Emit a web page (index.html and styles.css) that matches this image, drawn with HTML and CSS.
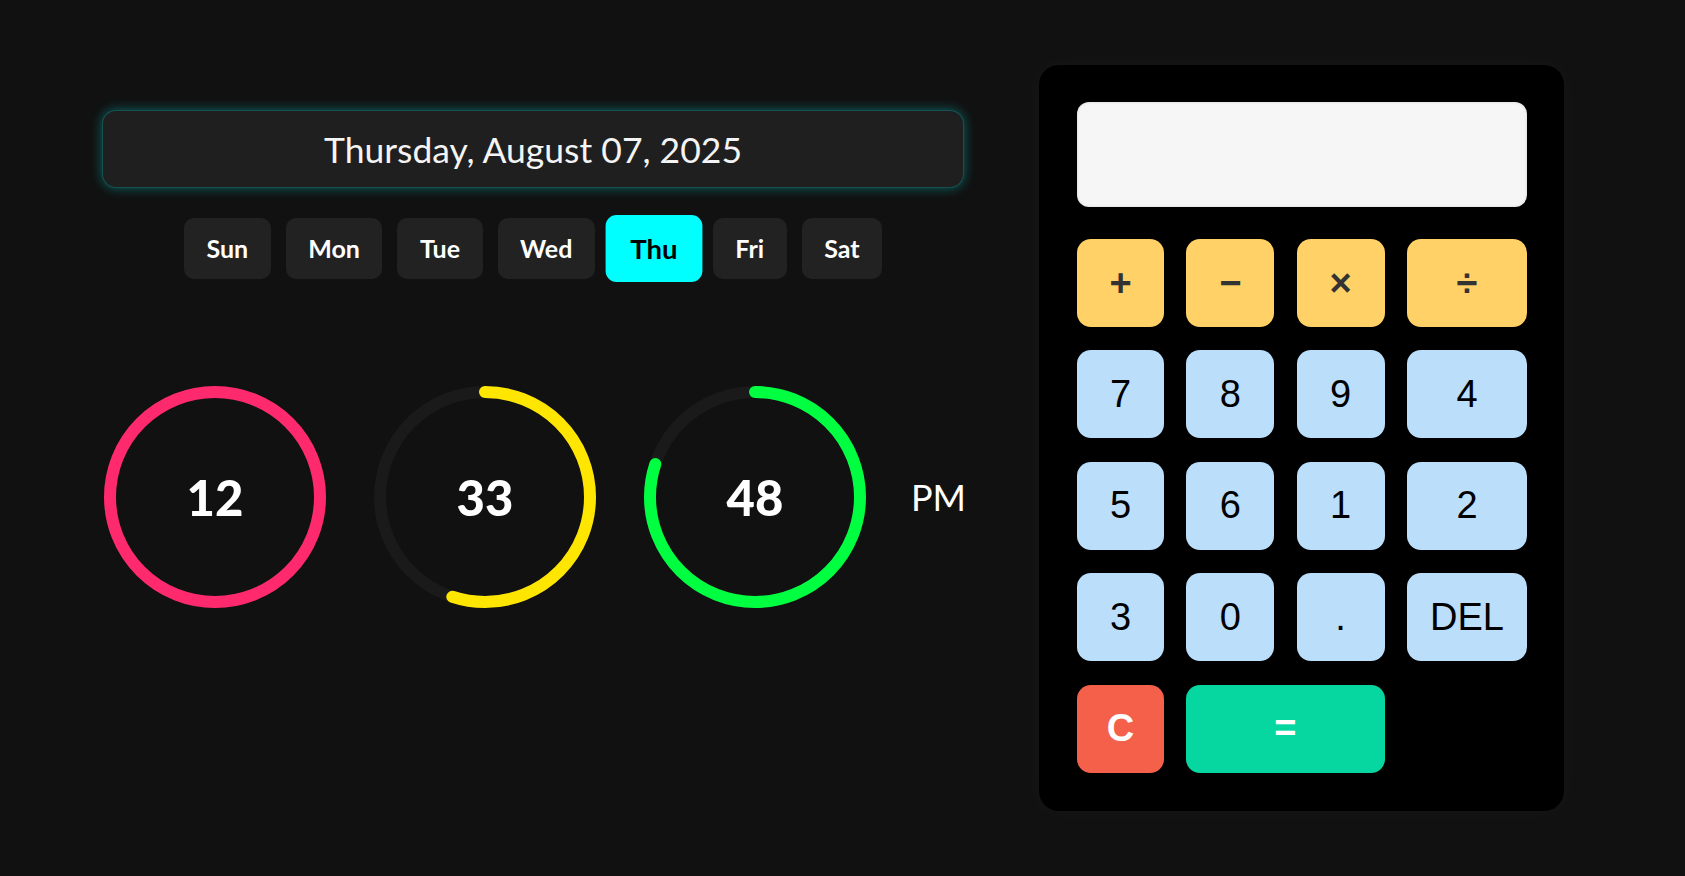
FILE: index.html
```html
<!DOCTYPE html>
<html lang="en">
<head>
<meta charset="utf-8">
<title>Clock &amp; Calculator</title>
<link rel="stylesheet" href="styles.css">
</head>
<body>
<div class="app">
  <section class="clock">
    <div class="date">Thursday, August 07, 2025</div>
    <div class="days">
      <span class="day">Sun</span>
      <span class="day">Mon</span>
      <span class="day">Tue</span>
      <span class="day">Wed</span>
      <span class="day active">Thu</span>
      <span class="day">Fri</span>
      <span class="day">Sat</span>
    </div>
    <div class="time">
      <div class="ring">
        <svg width="222" height="222" viewBox="0 0 222 222">
          <circle class="track" cx="111" cy="111" r="105"/>
          <circle class="arc hours" cx="111" cy="111" r="105" stroke-dasharray="659.7 659.7"/>
        </svg>
        <span class="num">12</span>
      </div>
      <div class="ring">
        <svg width="222" height="222" viewBox="0 0 222 222">
          <circle class="track" cx="111" cy="111" r="105"/>
          <circle class="arc minutes" cx="111" cy="111" r="105" stroke-dasharray="362.8 659.7"/>
        </svg>
        <span class="num">33</span>
      </div>
      <div class="ring">
        <svg width="222" height="222" viewBox="0 0 222 222">
          <circle class="track" cx="111" cy="111" r="105"/>
          <circle class="arc seconds" cx="111" cy="111" r="105" stroke-dasharray="527.8 659.7"/>
        </svg>
        <span class="num">48</span>
      </div>
      <span class="ampm">PM</span>
    </div>
  </section>

  <section class="calc">
    <div class="screen"></div>
    <div class="keys">
      <button class="key op">+</button>
      <button class="key op">&minus;</button>
      <button class="key op">&times;</button>
      <button class="key op">&divide;</button>
      <button class="key">7</button>
      <button class="key">8</button>
      <button class="key">9</button>
      <button class="key">4</button>
      <button class="key">5</button>
      <button class="key">6</button>
      <button class="key">1</button>
      <button class="key">2</button>
      <button class="key">3</button>
      <button class="key">0</button>
      <button class="key">.</button>
      <button class="key">DEL</button>
      <button class="key clear">C</button>
      <button class="key equals">=</button>
    </div>
  </section>
</div>
</body>
</html>
```

FILE: styles.css
```css
html, body {
  margin: 0;
  padding: 0;
  background: #111111;
  height: 100%;
}

body {
  font-family: Lato, "Open Sans", sans-serif;
  color: #ffffff;
}

.app {
  display: flex;
  align-items: flex-start;
  gap: 75px;
  padding: 65px 0 0 102px;
}

.clock {
  width: 862px;
  padding-top: 45px;
  display: flex;
  flex-direction: column;
  align-items: center;
}

.date {
  width: 100%;
  box-sizing: border-box;
  height: 78px;
  display: flex;
  align-items: center;
  justify-content: center;
  background: #1f1f1f;
  border: 1px solid rgba(0, 200, 200, 0.3);
  border-radius: 14px;
  box-shadow: 0 0 12px rgba(0, 255, 255, 0.35);
  font-size: 35.5px;
  font-weight: 400;
  color: #f4f4f4;
}

.days {
  margin-top: 30px;
  display: flex;
  gap: 15px;
}

.day {
  display: block;
  background: #222222;
  border-radius: 10px;
  padding: 0 22.5px;
  height: 61px;
  line-height: 61px;
  font-size: 25px;
  font-weight: 700;
  color: #ffffff;
}

.day.active {
  background: #00ffff;
  color: #000000;
  transform: scale(1.1);
}

.time {
  align-self: stretch;
  margin-top: 107px;
  padding-left: 2px;
  display: flex;
  align-items: center;
  gap: 48px;
}

.ring {
  position: relative;
  width: 222px;
  height: 222px;
}

.ring svg {
  display: block;
  transform: rotate(-90deg);
}

.track {
  fill: none;
  stroke: #1a1a1a;
  stroke-width: 12;
}

.arc {
  fill: none;
  stroke-width: 12;
  stroke-linecap: round;
}

.hours { stroke: #ff2a6d; }
.minutes { stroke: #ffe600; }
.seconds { stroke: #00ff41; }

.num {
  position: absolute;
  inset: 0;
  display: flex;
  align-items: center;
  justify-content: center;
  font-size: 49px;
  font-weight: 900;
  color: #ffffff;
}

.ampm {
  margin-left: -3px;
  font-size: 36px;
  font-weight: 400;
  color: #ffffff;
}

.calc {
  width: 525px;
  box-sizing: border-box;
  padding: 37px 37px 38px 38px;
  background: #000000;
  border-radius: 20px;
  box-shadow: 0 0 22px rgba(255, 255, 255, 0.03);
}

.screen {
  height: 105px;
  background: #f6f6f6;
  border-radius: 12px;
  box-shadow: inset 0 0 3px rgba(0, 0, 0, 0.15);
}

.keys {
  margin-top: 32px;
  display: grid;
  grid-template-columns: 87px 88px 88px 1fr;
  grid-auto-rows: 88px;
  column-gap: 22.3px;
  row-gap: 23.4px;
}

.key {
  border: none;
  border-radius: 14px;
  background: #bbdefb;
  color: #000000;
  font-family: "Liberation Sans", Arial, sans-serif;
  font-size: 38px;
  font-weight: 400;
  padding: 0;
  margin: 0;
}

.key.op {
  background: #ffd166;
  color: #333333;
  font-weight: 700;
}

.key.clear {
  background: #f5604b;
  color: #ffffff;
  font-weight: 700;
}

.key.equals {
  grid-column: span 2;
  background: #06d6a0;
  color: #ffffff;
  font-weight: 700;
}
```
